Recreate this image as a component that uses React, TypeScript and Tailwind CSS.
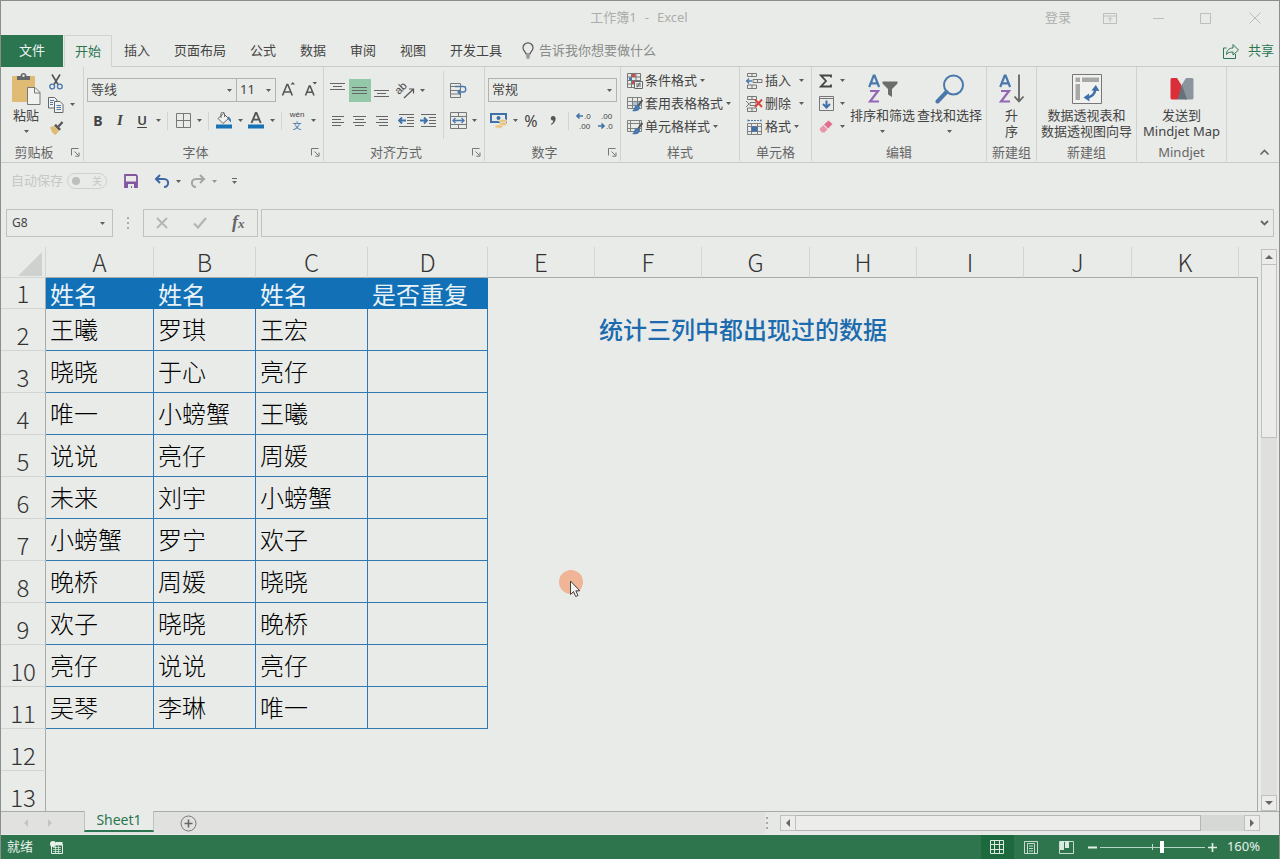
import type { ReactNode } from "react";

const cx = (...c: (string | false | undefined)[]) => c.filter(Boolean).join(" ");

/* ---------- small building blocks ---------- */

function Svg({ w, h, children }: { w: number; h: number; children: ReactNode }) {
  return (
    <svg width={w} height={h} viewBox={`0 0 ${w} ${h}`} fill="none" className="block shrink-0" aria-hidden="true">
      {children}
    </svg>
  );
}

function Caret({ className }: { className?: string }) {
  return (
    <span className={cx("flex shrink-0 items-center justify-center", className ?? "w-[11px]")}>
      <Svg w={5} h={3}>
        <path d="M0 0h5L2.500 3z" fill="#5c5f5c" />
      </Svg>
    </span>
  );
}

function Tool({ label, children, active, className }: { label: string; children: ReactNode; active?: boolean; className?: string }) {
  return (
    <button
      type="button"
      aria-label={label}
      className={cx("flex h-[23px] w-[22px] shrink-0 items-center justify-center", active && "bg-[#93c8a9]", className)}
    >
      {children}
    </button>
  );
}

function Split() {
  return <span className="mx-1 h-[18px] w-px shrink-0 bg-[#d3d5d2]" />;
}

function Launcher({ label }: { label: string }) {
  return (
    <button type="button" aria-label={label} className="flex w-4 items-center justify-center">
      <Svg w={9} h={9}>
        <path d="M.5 7.500v-7h7M3.500 3.500l4 4M8 4.500v3.700H4.300" stroke="#777" />
      </Svg>
    </button>
  );
}

function Group({ title, width, launcher, children }: { title: string; width: string; launcher?: boolean; children: ReactNode }) {
  return (
    <section aria-label={title} className={cx("flex shrink-0 flex-col border-r border-[#d0d2cf]", width)}>
      <div className="flex h-[76px]">{children}</div>
      <div className="flex h-[18px] items-center text-[13px] leading-[18px] text-[#666]">
        <span className="flex-1 text-center">{title}</span>
        {launcher && <Launcher label={`${title}设置`} />}
      </div>
    </section>
  );
}

function Combo({ label, options, width }: { label: string; options: string[]; width: string }) {
  return (
    <div className={cx("relative h-6 border border-[#b1b3b0]", width)}>
      <select aria-label={label} className="h-full w-full appearance-none bg-transparent pl-[3px] text-[13px] text-[#444] outline-none">
        {options.map((o) => (
          <option key={o}>{o}</option>
        ))}
      </select>
      <span className="pointer-events-none absolute inset-y-0 right-1 flex items-center">
        <Caret className="w-[5px]" />
      </span>
    </div>
  );
}

function BigButton({ icon, lines, caret, className }: { icon: ReactNode; lines: string[]; caret?: boolean; className?: string }) {
  return (
    <button type="button" className={cx("flex flex-col items-center pt-1 text-[13px] leading-4 text-[#444]", className)}>
      <span className="flex h-9 items-center">{icon}</span>
      {lines.map((l) => (
        <span key={l} className="whitespace-nowrap">
          {l}
        </span>
      ))}
      {caret && <Caret className="h-4 w-[11px]" />}
    </button>
  );
}

function RowButton({ icon, text, caret }: { icon: ReactNode; text: string; caret?: string }) {
  return (
    <button type="button" className="flex h-[23px] items-center text-[13px] text-[#444]">
      {icon}
      <span className="ml-0.5 whitespace-nowrap">{text}</span>
      <Caret className={caret} />
    </button>
  );
}

/* ---------- icons ---------- */

const AlignLines = ({ rows, shift = 0 }: { rows: [number, number][]; shift?: number }) => (
  <Svg w={16} h={20}>
    {rows.map(([x, w], i) => (
      <path key={i} d={`M${x} ${5.5 + i * 3 + shift}h${w}`} stroke="#666" />
    ))}
  </Svg>
);

const PasteIcon = () => (
  <Svg w={30} h={34}>
    <rect x="1" y="4" width="23" height="26" rx="1" fill="#e0bb74" />
    <path d="M6 8V4h3.500c0-4 6-4 6 0H19v4z" fill="#666" />
    <circle cx="12.500" cy="3.800" r="1.200" fill="#e9ebe8" />
    <path d="M16.500 15.500h7.500l5 5v12H16.500z" fill="#f1f2f0" stroke="#777" />
    <path d="M23.500 15.500v5.500H29" stroke="#777" />
  </Svg>
);

const CutIcon = () => (
  <Svg w={14} h={16}>
    <path d="M3 .5l6 10M11 .5l-6 10" stroke="#555" strokeWidth="1.600" />
    <circle cx="3.200" cy="12.500" r="2.400" stroke="#4a78ad" strokeWidth="1.300" />
    <circle cx="10.800" cy="12.500" r="2.400" stroke="#4a78ad" strokeWidth="1.300" />
  </Svg>
);

const CopyIcon = () => (
  <Svg w={16} h={16}>
    <path d="M.5.5h6l2.500 2.500v8H.5z" fill="#f1f2f0" stroke="#666" />
    <path d="M2 3.500h4M2 5.500h3M2 7.500h3" stroke="#4a78ad" />
    <path d="M6.500 4.500h5.500l3 3v8h-8.500z" fill="#f1f2f0" stroke="#666" />
    <path d="M8.500 8.500h4.500M8.500 10.500h4.500M8.500 12.500h4.500" stroke="#4a78ad" />
  </Svg>
);

const BrushIcon = () => (
  <Svg w={15} h={14}>
    <path d="M1 6l4-1 5 5-3.500 4C4 13 2 10 1 6z" fill="#e0bb74" />
    <path d="M5 4.500l2-1.500 5 5-1.800 1.800z" fill="#555" />
    <path d="M9.500 5.500l4-4.500" stroke="#555" strokeWidth="2.200" />
  </Svg>
);

const GrowFont = ({ down }: { down?: boolean }) => (
  <Svg w={16} h={18}>
    {down ? (
      <path d="M2.500 14.500L6.300 5h.8l3.900 9.500M3.900 11.300h5.600" stroke="#555" strokeWidth="1.600" />
    ) : (
      <path d="M1.500 14.500L6 3.500h.8l4.500 11M3 11h6.800" stroke="#555" strokeWidth="1.600" />
    )}
    {down ? <path d="M9.500 1h4.500L11.800 3.500z" fill="#555" /> : <path d="M9.500 3.500h4.500L11.800 1z" fill="#555" />}
  </Svg>
);

const BorderIcon = () => (
  <Svg w={15} h={15}>
    <path d="M.5.5h14v14H.5zM7.500.5v14M.5 7.500h14" stroke="#777" />
  </Svg>
);

const FillIcon = () => (
  <Svg w={18} h={17}>
    <path d="M3 6.500L8.500 1.500l5 5-5.500 5z" fill="#f1f2f0" stroke="#666" />
    <path d="M6 6V1.500C6-.3 9.500-.3 9.500 1.500V5" stroke="#666" />
    <path d="M13 4.500c2 .5 3.500 3 3 6-1-1-2-2-3.500-4z" fill="#4a78ad" />
    <path d="M1 12.500h16v4H1z" fill="#1673b5" />
  </Svg>
);

const FontColorIcon = () => (
  <Svg w={18} h={17}>
    <path d="M4.500 11L8.700 1h.8l4.200 10M6 7.600h6.200" stroke="#555" strokeWidth="1.900" />
    <path d="M1 12.500h16v4H1z" fill="#1673b5" />
  </Svg>
);

const OrientationIcon = () => (
  <svg width={20} height={20} viewBox="0 0 20 20" className="block shrink-0 overflow-visible" aria-hidden="true">
    <text x="3" y="14" transform="rotate(-45 3 14)" fontSize="11" fill="#444" fontFamily="Liberation Sans">
      ab
    </text>
    <path d="M8 17L17 8.500M13 8h4.500v4.500" stroke="#555" fill="none" strokeWidth="1.200" />
  </svg>
);

const WrapIcon = () => (
  <Svg w={18} h={17}>
    <path d="M1.500 1.500h10v14h-10zM1.500 4.500h10M1.500 8.500h10M1.500 12h10" stroke="#777" />
    <path d="M6 4.500h8.500c3 0 3 5.500 0 5.500H9M11.500 7.500L9 10l2.500 2.500" stroke="#4a78ad" strokeWidth="1.400" />
  </Svg>
);

const MergeIcon = () => (
  <Svg w={17} h={17}>
    <path d="M.5.5h16v16H.5zM.5 4.500h16M.5 12.500h16M8.500.5v4M8.500 12.500v4" stroke="#777" />
    <path d="M3 8.500h11M5.500 6L3 8.500 5.500 11M11.500 6L14 8.500 11.500 11" stroke="#4a78ad" strokeWidth="1.300" />
  </Svg>
);

const IndentIcon = ({ right }: { right?: boolean }) => (
  <Svg w={17} h={16}>
    <path d="M1 1.500h15M9 4.500h7M9 7.500h7M9 10.500h7M1 13.500h15" stroke="#666" />
    {right ? (
      <path d="M0 7.500h6M4 4.500l3 3-3 3" stroke="#3f70a8" strokeWidth="1.800" />
    ) : (
      <path d="M1 7.500h7M4 4.500l-3 3 3 3" stroke="#3f70a8" strokeWidth="1.800" />
    )}
  </Svg>
);

const CurrencyIcon = () => (
  <Svg w={18} h={16}>
    <path d="M1 1h15v8H1z" fill="#e9ebe8" stroke="#3f70a8" strokeWidth="2" />
    <circle cx="8.500" cy="5" r="2" fill="#3f70a8" />
    <ellipse cx="13" cy="8" rx="4" ry="1.800" fill="#e9c47e" stroke="#e9ebe8" strokeWidth=".6" />
    <ellipse cx="13" cy="11" rx="4" ry="1.800" fill="#e9c47e" stroke="#e9ebe8" strokeWidth=".6" />
    <ellipse cx="9" cy="13.500" rx="4" ry="1.800" fill="#e9c47e" stroke="#e9ebe8" strokeWidth=".6" />
  </Svg>
);

const DecimalIcon = ({ less }: { less?: boolean }) => (
  <svg
    width={18}
    height={22}
    viewBox="0 0 18 22"
    className="block shrink-0 overflow-visible"
    aria-hidden="true"
    fontFamily="Liberation Sans"
    fontSize="8"
    fill="#444"
  >
    <text x={less ? 4 : 9} y="9">{less ? ".00" : ".0"}</text>
    <text x={less ? 9 : 4} y="19">{less ? ".0" : ".00"}</text>
    {less ? (
      <path d="M1 16h6M4.500 13.500L7 16l-2.500 2.500" stroke="#3f70a8" strokeWidth="1.600" fill="none" />
    ) : (
      <path d="M2 6h6M4.500 3.500L2 6l2.500 2.500" stroke="#3f70a8" strokeWidth="1.600" fill="none" />
    )}
  </svg>
);

const CondIcon = () => (
  <Svg w={16} h={16}>
    <path d="M.5.5h13v14H.5zM.5 4h13M.5 7.500h13M.5 11h13M4.500.5v14M9 .5v14" stroke="#777" />
    <path d="M5 1h3.500v3H5zM5 8h3.500v3H5z" fill="#c84f4f" />
    <path d="M2 4.500h3v3H2z" fill="#4a78ad" />
    <path d="M7.500 8.500h8v7h-8z" fill="#f1f2f0" stroke="#666" />
    <path d="M9 11h5M9 13h5M13 9.500l-3 5" stroke="#666" />
  </Svg>
);

const TableStyleIcon = ({ solid }: { solid?: boolean }) => (
  <Svg w={16} h={16}>
    {!solid && <path d="M5 5h9v4H5z" fill="#a9c3de" />}
    <path
      d={solid ? "M.5 1.500h14v11H.5zM.5 4.500h14M3.500 1.500v11M.5 9.500h14M12.500 1.500v11" : "M.5 1.500h14v11H.5zM.5 5.500h14M.5 9.500h14M5.500 1.500v11M10.500 1.500v11"}
      stroke="#808280"
    />
    <path d="M15.500 4l-5.500 7" stroke="#555" strokeWidth="2" />
    <path d="M11 9c-4.500 0-3 4-6 6 4.500 1 8-.5 8-4.300z" fill="#4a78ad" />
  </Svg>
);

const InsertIcon = () => (
  <Svg w={17} h={16}>
    <path d="M1.500.5h9v3h-9zM6 .5v3M7 6.500h9v3H7zM11.500 6.500v3M1.500 12h9v3.500h-9zM6 12v3.500" stroke="#777" />
    <path d="M0 8h6M3 5.500L.8 8 3 10.500" stroke="#4a78ad" strokeWidth="1.300" />
  </Svg>
);

const DeleteIcon = () => (
  <Svg w={17} h={16}>
    <path d="M1.500.5h9v3h-9zM6 .5v3M4 6.500h6v3H4zM1.500 12h9v3.500h-9zM6 12v3.500" stroke="#777" />
    <path d="M0 5l3 3-3 3" stroke="#777" />
    <path d="M9 3.500l7 7.500M16 3.500L9 11" stroke="#d6423c" strokeWidth="1.900" />
  </Svg>
);

const FormatIcon = () => (
  <Svg w={17} h={16}>
    <path d="M2 .5v3M15 .5v3M2 1.500h13" stroke="#4a78ad" strokeDasharray="2 1" />
    <path d="M1.500 4.500h14v11h-14zM1.500 7.500h14M1.500 12.500h14M5.500 4.500v11M11.500 4.500v11" stroke="#808280" />
    <path d="M5.500 7.500h6v5h-6z" fill="#3f70a8" />
  </Svg>
);

const SumIcon = () => (
  <Svg w={14} h={14}>
    <path d="M12 3.500V1.500H2L7 7l-5 5.500h10v-2" stroke="#444" strokeWidth="1.800" />
  </Svg>
);

const FillDownIcon = () => (
  <Svg w={15} h={15}>
    <path d="M.5.5h14v14H.5zM.5 2.500h14" stroke="#777" />
    <path d="M7.500 4.500v7M4 8l3.500 3.500L11 8" stroke="#3f70a8" strokeWidth="2" />
  </Svg>
);

const EraserIcon = () => (
  <Svg w={14} h={13}>
    <path d="M5 4.500L9.500.5l4 3.500-4.300 4.500z" fill="#e2708d" />
    <path d="M4.300 5.200l4.200 4-3 3.300H3L.8 10V8.500z" fill="#e994a9" />
  </Svg>
);

const Az = ({ children, w }: { children: ReactNode; w: number }) => (
  <Svg w={w} h={32}>
    <path d="M1.200 14L5.700 2.500h.9L11.100 14M3 10.300h6.500" stroke="#4a78ad" strokeWidth="2.200" />
    <path d="M2 18h8L2 28.500h9" stroke="#9467b5" strokeWidth="2.200" />
    {children}
  </Svg>
);

const SearchIcon = () => (
  <Svg w={30} h={30}>
    <circle cx="18.500" cy="11" r="9.500" stroke="#4a78ad" strokeWidth="2" />
    <path d="M11.500 18L2.500 27.500" stroke="#4a78ad" strokeWidth="4" strokeLinecap="round" />
  </Svg>
);

const PivotIcon = () => (
  <Svg w={30} h={30}>
    <path d="M.5.5h29v29H.5z" stroke="#777" fill="#f1f2f0" />
    <path d="M3.500 3.500h4.500v4.500H3.500zM10 3.500h17v4.500H10zM3.500 10h4.500v16H3.500z" fill="#a7a9a7" />
    <path d="M14 23.500c5.500 0 9-3.500 9.500-9" stroke="#3f70a8" strokeWidth="2.600" />
    <path d="M19.500 16.500L23.800 11l3.700 6zM17 19.500L11.500 23.500l6 4z" fill="#3f70a8" />
  </Svg>
);

const MindjetIcon = () => (
  <Svg w={24} h={22}>
    <path d="M2.500 0H7l5 8v6l-4.500 7.500h-5C1 21.500.5 21 .5 19.500V2C.5.500 1 0 2.500 0z" fill="#da2f38" />
    <path d="M21.500 0H16l-5 8v6l4 7.500h6.500c1.500 0 2-.5 2-2V2c0-1.500-.5-2-2-2z" fill="#8b959d" />
    <path d="M12 7l5 14.500H7.500z" fill="#66717a" />
  </Svg>
);

/* ---------- ribbon ---------- */

function Ribbon() {
  return (
    <div className="flex shrink-0 overflow-hidden border-b border-[#c9cbc8] pb-px">
      <Group title="剪贴板" width="w-[83px]" launcher>
        <BigButton className="ml-[10px]" icon={<PasteIcon />} lines={["粘贴"]} caret />
        <div className="ml-1 flex flex-col pt-[3px]">
          <Tool label="剪切"><CutIcon /></Tool>
          <div className="flex items-center">
            <Tool label="复制"><CopyIcon /></Tool>
            <Caret />
          </div>
          <Tool label="格式刷"><BrushIcon /></Tool>
        </div>
      </Group>

      <Group title="字体" width="w-[240px]" launcher>
        <div className="flex flex-col pl-[3px] pt-[11px]">
          <div className="flex">
            <Combo label="字体" options={["等线", "宋体", "微软雅黑"]} width="w-[150px]" />
            <Combo label="字号" options={["11", "12", "14"]} width="w-[40px] -ml-px" />
            <Tool label="增大字号" className="ml-0.5"><GrowFont /></Tool>
            <Tool label="减小字号"><GrowFont down /></Tool>
          </div>
          <div className="mt-[7px] flex items-center text-[#444]">
            <Tool label="加粗"><span className="text-[14px] font-bold">B</span></Tool>
            <Tool label="倾斜"><span className="font-['Liberation_Serif',serif] text-[15px] font-bold italic">I</span></Tool>
            <Tool label="下划线"><span className="text-[13px] font-semibold underline underline-offset-2">U</span></Tool>
            <Caret className="w-[10px]" />
            <Split />
            <Tool label="边框"><BorderIcon /></Tool>
            <Caret className="w-[10px]" />
            <Split />
            <Tool label="填充颜色"><FillIcon /></Tool>
            <Caret className="w-[10px]" />
            <Tool label="字体颜色"><FontColorIcon /></Tool>
            <Caret className="w-[10px]" />
            <Split />
            <Tool label="拼音">
              <span className="flex flex-col items-center text-[#444]">
                <span className="font-['Liberation_Sans',sans-serif] text-[8px] leading-[9px]">wén</span>
                <span className="font-['Noto_Sans_CJK_SC',sans-serif] text-[9px] leading-[13px] text-[#3f70a8]">文</span>
              </span>
            </Tool>
            <Caret className="w-[10px]" />
          </div>
        </div>
      </Group>

      <Group title="对齐方式" width="w-[161px]" launcher>
        <div className="flex flex-col pl-[3px] pt-3">
          <div className="flex items-center">
            <Tool label="顶端对齐"><AlignLines rows={[[0, 15], [3, 9], [0, 15]]} shift={-3} /></Tool>
            <Tool label="垂直居中" active><AlignLines rows={[[0, 15], [0, 15], [0, 15]]} shift={1} /></Tool>
            <Tool label="底端对齐"><AlignLines rows={[[0, 15], [3, 9], [0, 15]]} shift={4} /></Tool>
            <Tool label="方向" className="ml-0.5"><OrientationIcon /></Tool>
            <Caret className="w-[10px]" />
          </div>
          <div className="mt-[7px] flex items-center">
            <Tool label="左对齐"><AlignLines rows={[[2, 12], [2, 9], [2, 12], [2, 9]]} /></Tool>
            <Tool label="居中"><AlignLines rows={[[1, 13], [3, 9], [1, 13], [3, 9]]} /></Tool>
            <Tool label="右对齐"><AlignLines rows={[[2, 12], [5, 9], [2, 12], [5, 9]]} /></Tool>
            <Tool label="减少缩进量" className="ml-0.5"><IndentIcon /></Tool>
            <Tool label="增加缩进量"><IndentIcon right /></Tool>
          </div>
        </div>
        <div className="my-1 ml-1 w-px bg-[#d3d5d2]" />
        <div className="flex flex-col pl-[3px] pt-3">
          <Tool label="自动换行"><WrapIcon /></Tool>
          <div className="mt-[7px] flex items-center">
            <Tool label="合并后居中"><MergeIcon /></Tool>
            <Caret />
          </div>
        </div>
      </Group>

      <Group title="数字" width="w-[136px]" launcher>
        <div className="flex flex-col pl-[3px] pt-[11px]">
          <Combo label="数字格式" options={["常规", "数值", "货币"]} width="w-[129px]" />
          <div className="mt-[7px] flex items-center text-[#444]">
            <Tool label="会计数字格式"><CurrencyIcon /></Tool>
            <Caret className="w-[10px]" />
            <Tool label="百分比样式"><span className="text-[16px] leading-[22px]">%</span></Tool>
            <Tool label="千位分隔样式">
              <Svg w={6} h={9}>
                <path d="M3 0c4 0 3.500 6-1.500 9L1 8c1.500-1 2.500-2.500 2.300-3.500C0 5 0 0 3 0z" fill="#555" />
              </Svg>
            </Tool>
            <Split />
            <Tool label="增加小数位数"><DecimalIcon /></Tool>
            <Tool label="减少小数位数"><DecimalIcon less /></Tool>
          </div>
        </div>
      </Group>

      <Group title="样式" width="w-[119px]">
        <div className="flex flex-col pl-1.5 pt-0.5">
          <RowButton icon={<CondIcon />} text="条件格式" />
          <RowButton icon={<TableStyleIcon />} text="套用表格格式" />
          <RowButton icon={<TableStyleIcon solid />} text="单元格样式" />
        </div>
      </Group>

      <Group title="单元格" width="w-[72px]">
        <div className="flex flex-col pl-1.5 pt-0.5">
          <RowButton icon={<InsertIcon />} text="插入" caret="w-5" />
          <RowButton icon={<DeleteIcon />} text="删除" caret="w-5" />
          <RowButton icon={<FormatIcon />} text="格式" />
        </div>
      </Group>

      <Group title="编辑" width="w-[175px]">
        <div className="flex flex-col pl-[3px] pt-0.5">
          <div className="flex items-center">
            <Tool label="自动求和"><SumIcon /></Tool>
            <Caret className="w-[10px]" />
          </div>
          <div className="flex items-center">
            <Tool label="填充"><FillDownIcon /></Tool>
            <Caret className="w-[10px]" />
          </div>
          <div className="flex items-center">
            <Tool label="清除"><EraserIcon /></Tool>
            <Caret className="w-[10px]" />
          </div>
        </div>
        <BigButton
          className="ml-[3px]"
          icon={
            <Az w={30}>
              <path d="M14.500 8.500h15v2l-5.500 5.500v8l-4-2.500v-5.500l-5.500-5.500z" fill="#6b6d6b" />
            </Az>
          }
          lines={["排序和筛选"]}
          caret
        />
        <BigButton className="ml-0.5" icon={<SearchIcon />} lines={["查找和选择"]} caret />
      </Group>

      <Group title="新建组" width="w-[50px]">
        <BigButton
          className="w-full"
          icon={
            <Az w={26}>
              <path d="M20 1.500v27M15.500 23.500L20 28.500l4.500-5" stroke="#666" strokeWidth="1.800" />
            </Az>
          }
          lines={["升", "序"]}
        />
      </Group>

      <Group title="新建组" width="w-[100px]">
        <BigButton className="w-full" icon={<PivotIcon />} lines={["数据透视表和", "数据透视图向导"]} />
      </Group>

      <Group title="Mindjet" width="w-[90px]">
        <BigButton className="w-full" icon={<MindjetIcon />} lines={["发送到", "Mindjet Map"]} />
      </Group>

      <div className="flex flex-1 items-end justify-end pb-1 pr-[9px]">
        <button type="button" aria-label="折叠功能区">
          <Svg w={11} h={9}>
            <path d="M1.500 6.500l4-4 4 4" stroke="#666" strokeWidth="1.600" />
          </Svg>
        </button>
      </div>
    </div>
  );
}

/* ---------- sheet ---------- */

const columns = ["A", "B", "C", "D", "E", "F", "G", "H", "I", "J", "K"];
const header = ["姓名", "姓名", "姓名", "是否重复"];
const people = [
  ["王曦", "罗琪", "王宏"],
  ["晓晓", "于心", "亮仔"],
  ["唯一", "小螃蟹", "王曦"],
  ["说说", "亮仔", "周媛"],
  ["未来", "刘宇", "小螃蟹"],
  ["小螃蟹", "罗宁", "欢子"],
  ["晚桥", "周媛", "晓晓"],
  ["欢子", "晓晓", "晚桥"],
  ["亮仔", "说说", "亮仔"],
  ["吴琴", "李琳", "唯一"],
];

const rowHead = "border-b border-r border-b-[#d3d5d2] border-r-[#a9aba8] p-0 text-center align-bottom font-light text-[#333]";

function Sheet() {
  return (
    <table className="w-full table-fixed border-separate border-spacing-0 font-['Noto_Sans_CJK_SC',sans-serif] text-[24px] leading-[30px]">
      <colgroup>
        <col className="w-[45px]" />
        <col className="w-[108px]" />
        <col className="w-[102px]" />
        <col className="w-[112px]" />
        <col className="w-[120px]" />
        <col className="w-[107px]" />
        <col className="w-[107px]" />
        <col className="w-[108px]" />
        <col className="w-[107px]" />
        <col className="w-[107px]" />
        <col className="w-[108px]" />
        <col className="w-[107px]" />
        <col />
      </colgroup>
      <thead>
        <tr className="h-[31px]">
          <th className="border-b border-r border-b-[#d3d5d2] border-r-[#d3d5d2] p-0">
            <span className="flex justify-end pr-[3px] pt-1">
              <Svg w={24} h={24}>
                <path d="M24 0v24H0z" fill="#cfd1ce" />
              </Svg>
            </span>
          </th>
          {columns.map((c) => (
            <th key={c} scope="col" className="border-b border-r border-b-[#a9aba8] border-r-[#d3d5d2] p-0 align-bottom font-light text-[#333]">
              {c}
            </th>
          ))}
          <th className="border-b border-[#a9aba8] p-0" />
        </tr>
      </thead>
      <tbody>
        <tr className="h-[31px]">
          <th scope="row" className={rowHead}>1</th>
          {header.map((h, i) => (
            <td key={i} className="whitespace-nowrap bg-[#1170b6] p-0 pl-1 text-[#e9f2f6]">
              {h}
            </td>
          ))}
          <td colSpan={8} className="border-r border-[#a9aba8] p-0" />
        </tr>
        {people.map((p, r) => (
          <tr key={r} className="h-[42px]">
            <th scope="row" className={rowHead}>{r + 2}</th>
            {[...p, ""].map((name, c) => (
              <td key={c} className="whitespace-nowrap border-b border-r border-[#2f78b2] p-0 pb-0.5 pl-1 font-light text-black">
                {name}
              </td>
            ))}
            <td className="p-0" />
            {r === 0 ? (
              <td colSpan={7} className="whitespace-nowrap border-r border-[#a9aba8] p-0 pb-0.5 pl-1 font-medium text-[#1b6bae]">
                统计三列中都出现过的数据
              </td>
            ) : (
              <td colSpan={7} className="border-r border-[#a9aba8] p-0" />
            )}
          </tr>
        ))}
        {[12, 13].map((n) => (
          <tr key={n} className="h-[42px]">
            <th scope="row" className={rowHead}>{n}</th>
            <td colSpan={12} className="border-r border-[#a9aba8] p-0" />
          </tr>
        ))}
      </tbody>
    </table>
  );
}

function ScrollButton({ label, d }: { label: string; d: string }) {
  return (
    <button type="button" aria-label={label} className="flex size-4 shrink-0 items-center justify-center border border-[#bfc1be] bg-[#ecedeb]">
      <Svg w={8} h={8}>
        <path d={d} fill="#666" />
      </Svg>
    </button>
  );
}

/* ---------- window ---------- */

const tabs = ["插入", "页面布局", "公式", "数据", "审阅", "视图", "开发工具"];

export default function App() {
  return (
    <div className="flex h-screen min-h-[500px] flex-col overflow-hidden border-x border-t border-[#8c8e8c] bg-[#e9ebe8] font-['Noto_Sans','Noto_Sans_CJK_SC',sans-serif] text-[13px] text-[#444]">
      <header className="flex h-[34px] shrink-0 items-center pl-4 text-[#acaeac]">
        <div className="flex-1" />
        <h1 className="flex gap-2 font-normal">
          <span>工作簿1</span>
          <span>-</span>
          <span>Excel</span>
        </h1>
        <div className="flex flex-1 items-center justify-end pr-[18px]">
          <button type="button">登录</button>
          <button type="button" aria-label="功能区显示选项" className="ml-8">
            <Svg w={14} h={11}>
              <path d="M.5.5h13v10H.5zM.5 3h13M7 9V4.500M5 6.500l2-2 2 2" stroke="#bcbebb" />
            </Svg>
          </button>
          <button type="button" aria-label="最小化" className="ml-9">
            <Svg w={11} h={11}>
              <path d="M0 5.500h11" stroke="#bcbebb" />
            </Svg>
          </button>
          <button type="button" aria-label="最大化" className="ml-9">
            <Svg w={11} h={11}>
              <path d="M.5.5h10v10H.5z" stroke="#bcbebb" />
            </Svg>
          </button>
          <button type="button" aria-label="关闭" className="ml-[38px]">
            <Svg w={12} h={12}>
              <path d="M.5.5l11 11M11.500.5l-11 11" stroke="#bcbebb" />
            </Svg>
          </button>
        </div>
      </header>

      <nav className="flex h-8 shrink-0">
        <button type="button" className="w-[62px] bg-[#2b7650] text-[#eef5f0]">文件</button>
        <span className="w-px border-b border-[#c9cbc8]" />
        <button type="button" className="w-12 border-x border-t border-[#d0d2cf] text-[#2b7650]">开始</button>
        <div className="flex flex-1 items-stretch border-b border-[#c9cbc8]">
          {tabs.map((t) => (
            <button type="button" key={t} className="whitespace-nowrap px-3">
              {t}
            </button>
          ))}
          <label className="ml-2 flex items-center">
            <Svg w={12} h={17}>
              <path d="M4 12c0-2-3-3-3-6.200a5 5 0 0110 0C11 9 8 10 8 12z" stroke="#555" strokeWidth="1.200" />
              <path d="M4 14h4M4.500 16h3" stroke="#555" strokeWidth="1.200" />
            </Svg>
            <input
              aria-label="告诉我你想要做什么"
              placeholder="告诉我你想要做什么"
              className="ml-[5px] w-40 bg-transparent outline-none placeholder:text-[#8a8c8a]"
            />
          </label>
          <button type="button" className="ml-auto flex items-center gap-2 pr-[5px] text-[#2b7650]">
            <Svg w={18} h={16}>
              <path d="M4.500 5H1.500v10.500h12V11" stroke="#2b7650" />
              <path d="M4.500 11.500c0-4 2.500-6.500 6.500-6.500V1.500L16.500 7 11 12V9c-3 0-5 .5-6.500 2.500z" stroke="#2b7650" strokeLinejoin="round" />
            </Svg>
            共享
          </button>
        </div>
      </nav>

      <Ribbon />

      <div className="flex h-9 shrink-0 items-center pl-[10px]">
        <label className="flex items-center text-[13px] text-[#c6c8c5]">
          自动保存
          <input type="checkbox" className="sr-only" />
          <span className="ml-1 flex h-4 w-10 items-center justify-between rounded-full border border-[#cfd1ce] px-1 text-[10px]">
            <span className="size-2 rounded-full bg-[#bdbfbc]" />
            <span>关</span>
          </span>
        </label>
        <button type="button" aria-label="保存" className="ml-[17px]">
          <Svg w={14} h={14}>
            <path d="M1 1h11l1 1v11H1z" stroke="#83569f" strokeWidth="1.800" />
            <path d="M1 7.500h12V13H1z" fill="#83569f" />
            <path d="M4 10h6v4H8v-2H7v2H4z" fill="#e9ebe8" />
          </Svg>
        </button>
        <button type="button" aria-label="撤消" className="ml-4 flex items-center">
          <Svg w={16} h={14}>
            <path d="M2 5h8c5.500 0 5.500 8 0 8M6 1L2 5l4 4" stroke="#3f68a3" strokeWidth="2" />
          </Svg>
          <Caret className="ml-[3px] w-[11px]" />
        </button>
        <button type="button" aria-label="恢复" className="ml-1.5 flex items-center opacity-60">
          <Svg w={16} h={14}>
            <path d="M14 5H6C.5 5 .5 13 6 13M10 1l4 4-4 4" stroke="#777" strokeWidth="2" />
          </Svg>
          <Caret className="ml-[3px] w-[11px]" />
        </button>
        <button type="button" aria-label="自定义快速访问工具栏" className="ml-3">
          <Svg w={5} h={6}>
            <path d="M0 .5h5" stroke="#666" />
            <path d="M0 3h5L2.500 6z" fill="#666" />
          </Svg>
        </button>
      </div>

      <div className="mb-[10px] mt-[10px] flex h-7 shrink-0 pl-[5px] pr-[5px]">
        <div className="flex w-[107px] items-center border border-[#c0c2bf] pr-1">
          <input aria-label="名称框" defaultValue="G8" className="min-w-0 flex-1 bg-transparent pl-[5px] text-[12px] outline-none" />
          <Caret />
        </div>
        <div className="flex w-[30px] items-center justify-center">
          <Svg w={2} h={12}>
            <path d="M0 0h2v2H0zM0 5h2v2H0zM0 10h2v2H0z" fill="#aaa" />
          </Svg>
        </div>
        <div className="flex w-[115px] items-center justify-around border border-[#c0c2bf]">
          <button type="button" aria-label="取消">
            <Svg w={12} h={12}>
              <path d="M1 1l10 10M11 1L1 11" stroke="#b3b5b2" strokeWidth="1.800" />
            </Svg>
          </button>
          <button type="button" aria-label="输入">
            <Svg w={14} h={12}>
              <path d="M1 6.500l4 4L13 1" stroke="#b3b5b2" strokeWidth="2.200" />
            </Svg>
          </button>
          <button type="button" aria-label="插入函数" className="font-['Liberation_Serif',serif] text-[18px] font-bold italic leading-6 text-[#666]">
            f<span className="text-[13px]">x</span>
          </button>
        </div>
        <div className="ml-[3px] flex flex-1 items-center border border-[#c0c2bf] pr-1">
          <input aria-label="编辑栏" className="h-full min-w-0 flex-1 bg-transparent px-1 outline-none" />
          <Svg w={9} h={8}>
            <path d="M1 2l3.500 3.500L8 2" stroke="#666" strokeWidth="1.800" />
          </Svg>
        </div>
      </div>

      <main className="relative flex min-h-0 flex-1">
        <div className="min-w-0 flex-1 overflow-hidden">
          <Sheet />
        </div>
        <div className="ml-[3px] mr-0.5 mt-0.5 flex w-4 flex-col bg-[#dfe0de]">
          <ScrollButton label="向上滚动" d="M0 6h8L4 2z" />
          <div className="h-[173px] border-x border-b border-[#bfc1be] bg-[#ecedeb]" />
          <div className="flex-1" />
          <ScrollButton label="向下滚动" d="M0 2h8L4 6z" />
        </div>
        <div className="pointer-events-none absolute left-[558px] top-[323px]">
          <Svg w={26} h={30}>
            <circle cx="12" cy="12" r="12" fill="#f0b497" />
            <path d="M11.500 11v13.500l3-3 2.200 5 2.300-1-2.200-4.700h4z" fill="#f5f5f3" stroke="#444" />
          </Svg>
        </div>
      </main>

      <div className="flex h-6 shrink-0 border-b border-[#e9ebe8] bg-[#e1e2e0]">
        <div className="flex w-[83px] items-center gap-4 border-t border-[#a9aba8] pl-[21px]">
          <button type="button" aria-label="上一个工作表">
            <Svg w={8} h={8}>
              <path d="M6 0v8L2 4z" fill="#c3c5c2" />
            </Svg>
          </button>
          <button type="button" aria-label="下一个工作表">
            <Svg w={8} h={8}>
              <path d="M2 0v8l4-4z" fill="#c3c5c2" />
            </Svg>
          </button>
        </div>
        <button type="button" className="mb-0.5 flex w-[70px] justify-center border-x border-b-2 border-x-[#bfc1be] border-b-[#2b7650] bg-[#e9ebe8] text-[14px] leading-[18px] text-[#2b7650]">
          Sheet1
        </button>
        <div className="flex flex-1 items-center border-t border-[#a9aba8] pl-[26px]">
          <button type="button" aria-label="新工作表">
            <Svg w={17} h={17}>
              <circle cx="8.500" cy="8.500" r="7.500" stroke="#777" />
              <path d="M8.500 4.500v8M4.500 8.500h8" stroke="#666" strokeWidth="1.600" />
            </Svg>
          </button>
        </div>
        <div className="flex w-[514px] items-center border-t border-[#a9aba8] bg-[#e6e8e5] pr-[19px]">
          <span className="flex w-[15px] justify-end pr-3">
            <Svg w={2} h={12}>
              <path d="M0 0h2v2H0zM0 5h2v2H0zM0 10h2v2H0z" fill="#aaa" />
            </Svg>
          </span>
          <div className="flex flex-1 bg-[#d6d8d5]">
            <ScrollButton label="向左滚动" d="M6 0v8L2 4z" />
            <div className="h-4 w-[405px] border-y border-r border-[#b4b6b3] bg-[#ecedeb]" />
            <div className="flex-1" />
            <ScrollButton label="向右滚动" d="M2 0v8l4-4z" />
          </div>
        </div>
      </div>

      <footer className="flex h-6 shrink-0 items-stretch bg-[#2e754e] text-[#e6f0ea]">
        <span className="flex items-center pl-1.5">就绪</span>
        <button type="button" aria-label="录制宏" className="ml-[17px]">
          <Svg w={13} h={13}>
            <path d="M1.500 3.500h11v9h-11z" stroke="#e6f0ea" />
            <path d="M3 6.500h8M3 8.500h8M3 10.500h8M5.500 5v7M8.500 5v7" stroke="#e6f0ea" strokeWidth=".7" />
            <path d="M6 1h6.500v3.500H6z" fill="#e6f0ea" />
            <circle cx="3" cy="3" r="3" fill="#e6f0ea" />
          </Svg>
        </button>
        <div className="ml-auto flex items-stretch">
          <button type="button" aria-label="普通" className="flex w-[33px] items-center justify-center bg-[#1b693d]">
            <Svg w={14} h={14}>
              <path d="M.5.5h13v13H.5zM4.500.5v13M9.500.5v13M.5 4.500h13M.5 9.500h13" stroke="#dbe9e0" />
            </Svg>
          </button>
          <button type="button" aria-label="页面布局" className="flex w-[35px] items-center justify-center">
            <Svg w={14} h={13}>
              <path d="M.5.5h13v12H.5zM3.500 2.500h7v10h-7zM5 5h4M5 7.500h4M5 10h4" stroke="#c5dccf" />
            </Svg>
          </button>
          <button type="button" aria-label="分页预览" className="flex w-[35px] items-center justify-center">
            <Svg w={15} h={13}>
              <path d="M.5.5h14v12H.5z" stroke="#c5dccf" />
              <path d="M1 0h4v9H1zM6 0h4v7H6z" fill="#dbe9e0" />
            </Svg>
          </button>
          <button type="button" aria-label="缩小" className="ml-1 flex w-3 items-center">
            <Svg w={9} h={9}>
              <path d="M0 4.500h9" stroke="#e6f0ea" strokeWidth="2" />
            </Svg>
          </button>
          <div className="relative flex w-[105px] items-center">
            <span className="absolute left-[52px] h-1.5 w-px bg-[#c5dccf]" />
            <input
              type="range"
              aria-label="显示比例"
              min={-50}
              max={50}
              defaultValue={10}
              className="relative h-3 w-full appearance-none bg-transparent [&::-webkit-slider-runnable-track]:h-px [&::-webkit-slider-runnable-track]:bg-[#b9d3c4] [&::-webkit-slider-thumb]:-mt-[6px] [&::-webkit-slider-thumb]:h-3 [&::-webkit-slider-thumb]:w-1 [&::-webkit-slider-thumb]:appearance-none [&::-webkit-slider-thumb]:bg-white"
            />
          </div>
          <button type="button" aria-label="放大" className="ml-[3px] flex items-center">
            <Svg w={9} h={9}>
              <path d="M0 4.500h9M4.500 0v9" stroke="#e6f0ea" strokeWidth="1.600" />
            </Svg>
          </button>
          <button type="button" className="ml-2.5 mr-[19px] text-[13px]">160%</button>
        </div>
      </footer>
    </div>
  );
}
